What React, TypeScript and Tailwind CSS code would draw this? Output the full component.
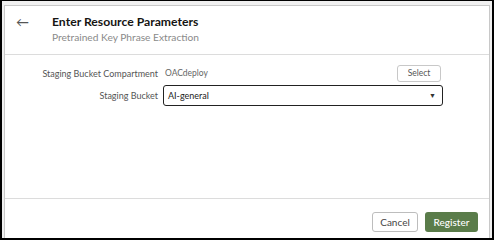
import React from "react";

export default function App() {
  return (
    <div
      className="w-[494px] h-[240px] overflow-hidden border-l-2 border-t border-r-2 border-b-2 border-black bg-white"
      style={{ fontFamily: 'Lato, "Noto Sans", sans-serif' }}
    >
      <div className="h-full pt-[4px] pl-[2px] pr-[2px] bg-[#f0f0f0]">
        <div className="h-[240px] border-l border-t border-r border-[#c8c8c8] bg-white flex flex-col">
          <div className="h-[49px] border-b border-[#dcdcdc] flex items-start pt-[8px]">
            <div className="w-[47px] pl-[11px] pt-[1px] text-[#555] text-[13px] leading-[14px]">←</div>
            <div className="flex flex-col">
              <div className="text-[12.2px] font-bold text-[#161513] leading-[16px]">Enter Resource Parameters</div>
              <div className="text-[10.2px] text-[#8a8a8a] leading-[14px]">Pretrained Key Phrase Extraction</div>
            </div>
          </div>
          <div className="h-[144px] border-b border-[#dcdcdc] pt-[10px]">
            <div className="flex items-center h-[17px]">
              <div className="w-[153px] text-right text-[9px] text-[#555]">Staging Bucket Compartment</div>
              <div className="ml-[7px] text-[8.5px] text-[#666] w-[232px]">OACdeploy</div>
              <button className="w-[44px] h-[17px] border border-[#c8c8c8] rounded-[3px] text-[8.5px] text-[#555] bg-white">Select</button>
            </div>
            <div className="flex items-center mt-[3px]">
              <div className="w-[153px] text-right text-[9px] text-[#555]">Staging Bucket</div>
              <div className="ml-[5px] w-[280px] h-[21px] border border-[#222] rounded-[3px] flex items-center justify-between pl-[4px] pr-[6px]">
                <span className="text-[9px] text-[#222]">AI-general</span>
                <span className="text-[7px] text-[#333]">▼</span>
              </div>
            </div>
          </div>
          <div className="flex justify-end gap-[7px] pr-[11px] pt-[13px]">
            <button className="w-[46px] h-[20px] border border-[#bdbdbd] rounded-[3px] text-[10px] text-[#444] bg-white">Cancel</button>
            <button className="w-[53px] h-[20px] rounded-[3px] text-[10px] font-medium text-white bg-[#5a7c4a]">Register</button>
          </div>
        </div>
      </div>
    </div>
  );
}
